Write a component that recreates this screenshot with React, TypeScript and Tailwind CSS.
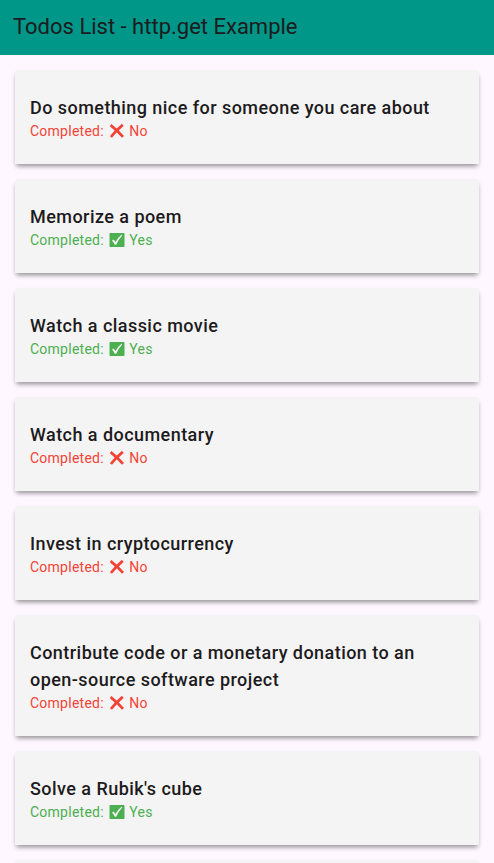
import React from "react";

type Todo = { title: string; done: boolean };

const todos: Todo[] = [
  { title: "Do something nice for someone you care about", done: false },
  { title: "Memorize a poem", done: true },
  { title: "Watch a classic movie", done: true },
  { title: "Watch a documentary", done: false },
  { title: "Invest in cryptocurrency", done: false },
  { title: "Contribute code or a monetary donation to an open-source software project", done: false },
  { title: "Solve a Rubik's cube", done: true },
];

function Cross() {
  return (
    <svg viewBox="0 0 16 16" className="h-4 w-4" stroke="#f44336" strokeWidth="2.7" fill="none">
      <path d="M1.6 2.1Q8.5 7.5 14 13.9M13.8 1.9Q7 7.5 1.9 14" />
    </svg>
  );
}

function Check() {
  return (
    <svg viewBox="0 0 16 16" className="h-4 w-4">
      <rect x="0.5" y="1" width="15" height="14" rx="0.8" fill="#4caf50" />
      <path d="M3 8.6L4.7 7.5L6.5 10Q9 5.6 12.4 2.8L13.2 3.5Q9.6 7.2 7.2 12.8H5.8Q4.7 10.4 3 8.6Z" fill="#f5f5f5" />
    </svg>
  );
}

function TodoCard({ title, done }: Todo) {
  return (
    <li className="rounded-t-[3px] bg-[#f4f4f4] px-[15px] pt-6 pb-[23px] shadow-[0_4px_5px_-2px_rgba(0,0,0,0.26),0_3px_5px_-1px_rgba(0,0,0,0.18),0_2px_4px_rgba(0,0,0,0.04)]">
      <h2 className="text-[18px] leading-[27px] font-medium tracking-[0.45px] text-[#1d1b20]">{title}</h2>
      <p className={`flex h-5 items-center text-[14px] leading-5 tracking-[0.25px] ${done ? "text-[#4caf50]" : "text-[#f44336]"}`}>
        <span>Completed:</span>
        <span className="mr-[4.5px] ml-[5px]">{done ? <Check /> : <Cross />}</span>
        <span>{done ? "Yes" : "No"}</span>
      </p>
    </li>
  );
}

export default function App() {
  return (
    <div className="h-[863px] w-full overflow-hidden bg-[#fef7ff] font-[Roboto,sans-serif]">
      <header className="flex h-[55px] items-center bg-[#009688] px-[13px] pb-0.5 text-[22px] text-[#1d1b20]">
        <h1>Todos List - http.get Example</h1>
      </header>
      <ul className="flex flex-col gap-[15px] px-[15px] pt-[15px]">
        {todos.map((t) => (
          <TodoCard key={t.title} {...t} />
        ))}
        <li className="h-24 rounded-t-[3px] bg-[#f4f4f4] shadow-[0_2px_4px_rgba(0,0,0,0.08)]" />
      </ul>
    </div>
  );
}
